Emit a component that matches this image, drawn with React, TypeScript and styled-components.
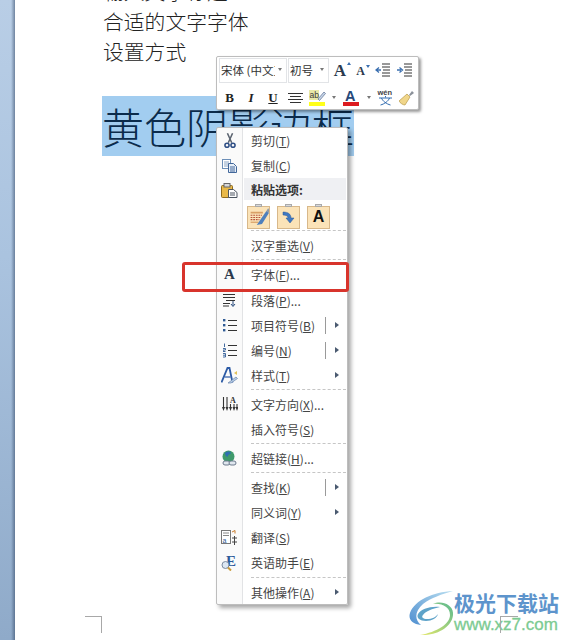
import type { ReactNode } from "react";
import styled, { createGlobalStyle } from "styled-components";

const cjk = `"Noto Sans CJK SC", "Liberation Sans", sans-serif`;

const GlobalStyle = createGlobalStyle`
    html, body {
        margin: 0;
        padding: 0;
        height: 640px;
        overflow: hidden;
        background: #fff;
    }
`;

const Page = styled.div`
    display: flex;
    width: 569px;
    height: 640px;
    overflow: hidden;
    position: relative;
    font-family: ${cjk};
`;

const Rail = styled.div`
    width: 15px;
    flex: none;
    background:
        linear-gradient(to right, transparent 0 11px, rgba(60, 80, 110, 0.15) 12px, rgba(50, 70, 100, 0.55) 15px),
        linear-gradient(to bottom, #b9cee6 0%, #aac3df 40%, #8faac9 100%);
`;

const Doc = styled.div`
    flex: 1;
    padding: 0 0 0 88px;
    margin-top: -24px;
`;

const Line = styled.div`
    font-size: 20.8px;
    font-weight: 300;
    line-height: 30px;
    color: #222;
`;

const Selected = styled.div`
    display: inline-block;
    margin: 30px 0 0 -1px;
    height: 60px;
    line-height: 60px;
    font-size: 42px;
    font-weight: 300;
    color: #0b2b4b;
    background: #a2cdf0;
    width: 252px;
    white-space: nowrap;
`;

const Toolbar = styled.div`
    position: absolute;
    left: 216px;
    top: 56px;
    width: 203px;
    height: 54px;
    box-sizing: border-box;
    background: #fff;
    border: 1px solid #bdbdbd;
    border-radius: 2px;
    box-shadow: 2px 2px 3px rgba(0, 0, 0, 0.4);
    padding: 1px 2px;
    display: flex;
    flex-direction: column;
    z-index: 3;
`;

const ToolRow = styled.div`
    display: flex;
    align-items: center;
    height: 25px;
`;

const ToolRowBottom = styled(ToolRow)`
    margin-top: 2px;
`;

const Select = styled.div<{ $w: number }>`
    width: ${(p) => p.$w}px;
    height: 25px;
    box-sizing: border-box;
    border: 1px solid #e2e4e7;
    margin-right: 1px;
    font-size: 11.5px;
    line-height: 14px;
    color: #333;
    display: flex;
    align-items: center;
    gap: 3px;
    padding: 0 4px 2px 1px;
    white-space: nowrap;
`;

const SelectText = styled.span`
    flex: 1;
    overflow: hidden;
`;

const Caret = styled.span`
    width: 0;
    height: 0;
    flex: none;
    border-left: 2.5px solid transparent;
    border-right: 2.5px solid transparent;
    border-top: 3px solid #777;
`;

const ToolCell = styled.div<{ $w: number }>`
    width: ${(p) => p.$w}px;
    height: 25px;
    flex: none;
    display: flex;
    align-items: center;
    justify-content: center;
    font-family: "Liberation Serif", serif;
    color: #222;
`;

const GrowA = styled.span<{ $size: number; $down?: boolean }>`
    font-family: "Liberation Serif", serif;
    font-size: ${(p) => p.$size}px;
    font-weight: 700;
    line-height: 1;
    color: #2b3a4e;
    position: relative;
    &::after {
        content: "";
        display: ${(p) => (p.$down === undefined ? "none" : "block")};
        position: absolute;
        right: -5px;
        top: 0;
        border-left: 2.5px solid transparent;
        border-right: 2.5px solid transparent;
        border-bottom: ${(p) => (p.$down ? "0" : "3px solid #3a6fb0")};
        border-top: ${(p) => (p.$down ? "3px solid #3a6fb0" : "0")};
    }
`;

const StyleLetter = styled.span<{ $italic?: boolean; $under?: boolean }>`
    font-size: 13px;
    font-weight: 700;
    font-style: ${(p) => (p.$italic ? "italic" : "normal")};
    text-decoration: ${(p) => (p.$under ? "underline" : "none")};
`;

const Menu = styled.div`
    position: absolute;
    left: 216px;
    top: 127px;
    width: 132px;
    height: 478px;
    box-sizing: border-box;
    border: 1px solid #bdbdbd;
    border-radius: 2px;
    box-shadow: 3px 3px 4px rgba(0, 0, 0, 0.35);
    background: linear-gradient(to right, #fafafa 0 25px, #e2e3e5 25px 26px, #fff 26px);
    z-index: 2;
`;

const Row = styled.div`
    height: 25.1px;
    display: flex;
    align-items: center;
    position: relative;
    font-size: 12px;
    color: #444;
    white-space: nowrap;
`;

const HeaderBand = styled.div`
    flex: 1;
    align-self: flex-start;
    height: 22px;
    margin: 0 1px 0 2px;
    padding-left: 7px;
    background: #eff0f3;
    font-weight: 700;
    color: #333;
    display: flex;
    align-items: center;
`;

const IconSlot = styled.div`
    width: 25px;
    flex: none;
    display: flex;
    align-items: center;
    justify-content: center;
`;

const Label = styled.span`
    margin-left: 9px;
    u {
        text-underline-offset: 1px;
    }
`;

const SubDivider = styled.span`
    position: absolute;
    left: 108px;
    top: 4px;
    height: 17px;
    width: 1px;
    background: #9a9a9a;
`;

const Arrow = styled.span`
    position: absolute;
    left: 118px;
    top: 9px;
    width: 0;
    height: 0;
    border-top: 3.5px solid transparent;
    border-bottom: 3.5px solid transparent;
    border-left: 4px solid #4a5a70;
`;

const Sep = styled.div`
    height: 0;
    margin: 1px 1px 2px 34px;
    border-top: 1px dashed #c6c6c6;
`;

const PasteRow = styled.div`
    display: flex;
    gap: 7px;
    height: 26px;
    padding: 2px 0 0 30px;
    box-sizing: border-box;
    align-items: center;
`;

const PasteButton = styled.div`
    width: 23px;
    height: 23px;
    box-sizing: border-box;
    background: #fbe3b8;
    border: 1px solid #d8b88a;
    display: flex;
    align-items: center;
    justify-content: center;
    position: relative;
    font-family: "Liberation Sans", sans-serif;
    font-weight: 700;
    font-size: 16px;
    color: #111;
    &::before {
        content: "";
        position: absolute;
        top: -3px;
        left: 7px;
        width: 7px;
        height: 3px;
        background: #d9d9d9;
        border: 1px solid #aaa;
        box-sizing: border-box;
    }
`;

const Highlight = styled.div`
    position: absolute;
    left: 182px;
    top: 262px;
    width: 167px;
    height: 30px;
    box-sizing: border-box;
    border: 3px solid #d8342c;
    border-radius: 3px;
    z-index: 4;
`;

const CropLeft = styled.div`
    position: absolute;
    left: 85px;
    top: 616px;
    width: 16px;
    height: 16px;
    border-top: 1px solid #a8a8a8;
    border-right: 1px solid #a8a8a8;
`;

const CropRight = styled.div`
    position: absolute;
    left: 500px;
    top: 616px;
    width: 17px;
    height: 16px;
    border-top: 1px solid #a8a8a8;
    border-left: 1px solid #a8a8a8;
    z-index: 6;
`;

const Watermark = styled.div`
    position: absolute;
    left: 409px;
    top: 589px;
    display: flex;
    gap: 1px;
    z-index: 5;
`;

const BrandText = styled.div`
    display: flex;
    flex-direction: column;
`;

const BrandName = styled.div`
    font-size: 21px;
    line-height: 26px;
    font-weight: 700;
    color: #5d94cc;
    white-space: nowrap;
`;

const BrandUrl = styled.div`
    font-family: "Liberation Sans", sans-serif;
    font-size: 17px;
    line-height: 20px;
    color: #7ccb92;
    -webkit-text-stroke: 0.3px #7ccb92;
`;

const Scissors = () => (
    <svg width="12" height="16" viewBox="0 0 14 18">
        <path d="M4 0l5 11M10 0L5 11" stroke="#5b6470" strokeWidth="1.8" fill="none" />
        <circle cx="3.5" cy="14" r="2.4" stroke="#2f4f86" strokeWidth="1.8" fill="none" />
        <circle cx="10.5" cy="14" r="2.4" stroke="#2f4f86" strokeWidth="1.8" fill="none" />
    </svg>
);

const Copy = () => (
    <svg width="16" height="14" viewBox="0 0 16 14">
        <rect x="0.5" y="0.5" width="8" height="9" fill="#fff" stroke="#6d8fb8" />
        <path d="M2 3h5M2 5h5M2 7h5" stroke="#8aa5c5" />
        <path d="M6.5 4.5h5l3 3v6h-8z" fill="#e8f0f9" stroke="#42679a" />
        <path d="M8 8h5M8 10h5M8 12h5" stroke="#42679a" />
    </svg>
);

const Paste = () => (
    <svg width="17" height="15" viewBox="0 0 17 15">
        <rect x="0.5" y="2.5" width="11" height="12" rx="1" fill="#e9b949" stroke="#8f6b1e" />
        <rect x="3" y="0.5" width="6" height="3.5" fill="#d8d8d8" stroke="#666" />
        <path d="M7.5 6.5h5l3.5 3v5H7.5z" fill="#fff" stroke="#4d5560" />
        <path d="M9 10h5M9 12h5" stroke="#4d5560" />
    </svg>
);

const Paragraph = () => (
    <svg width="13" height="14" viewBox="0 0 13 14">
        <path d="M0 1.5h12M0 4.5h12M3 7.5h9M0 10.5h7M0 13h6" stroke="#333" />
        <path d="M10 8v4.5M8 11l2 2.5 2-2.5" stroke="#27497a" fill="none" />
    </svg>
);

const Bullets = () => (
    <svg width="14" height="14" viewBox="0 0 14 14">
        <rect x="0" y="1" width="2.4" height="2.4" fill="#2e5a95" />
        <rect x="0" y="6" width="2.4" height="2.4" fill="#2e5a95" />
        <rect x="0" y="11" width="2.4" height="2.4" fill="#2e5a95" />
        <path d="M5 2.5h9M5 7.5h9M5 12.5h9" stroke="#333" />
    </svg>
);

const Numbers = () => (
    <svg width="14" height="15" viewBox="0 0 14 15">
        <path d="M1.5 0.5v3.5M0 5.5h2.5v1.5H0v1.5h2.5M0 10.5h2.5v3.5H0M0 12.2h2" stroke="#2e5a95" strokeWidth="0.9" fill="none" />
        <path d="M5 2.5h9M5 7.5h9M5 12.5h9" stroke="#333" />
    </svg>
);

const StyleIcon = () => (
    <svg width="17" height="17" viewBox="0 0 17 17">
        <path d="M0.5 15.5L6.5 1h2l3 14.5" fill="none" stroke="#2c5aa5" strokeWidth="1.8" />
        <path d="M3.5 10h6" stroke="#2c5aa5" strokeWidth="1.2" />
        <path d="M7 16l8-6 1.5 1.5L10 16z" fill="#b9cde6" stroke="#6a87ad" strokeWidth="0.7" />
        <path d="M13 6l3-2v4z" fill="#e3c25a" />
    </svg>
);

const TextDirection = () => (
    <svg width="16" height="15" viewBox="0 0 16 15">
        <path d="M1.5 0v11M5 0v11M8.5 7v4M12 7v4M15 7v4" stroke="#333" strokeWidth="1.1" />
        <path d="M0 10l1.5 4 1.5-4zM3.5 10l1.5 4 1.5-4zM7 10l1.5 4 1.5-4zM10.5 10l1.5 4 1.5-4zM13.5 10l1.5 4 1.5-4z" fill="#333" />
        <text x="8" y="6" fontSize="8" fontFamily="Liberation Serif" fontWeight="700" fill="#333">A</text>
    </svg>
);

const Globe = () => (
    <svg width="17" height="17" viewBox="0 0 17 17">
        <circle cx="7.5" cy="6.5" r="6" fill="#3f9a6b" />
        <path d="M4 3c2-2 5-2 6 0-1 2-3 1-3 3S4 6 4 3z" fill="#2f6fb0" />
        <rect x="2" y="11" width="7" height="4" rx="2" fill="#dfe6ee" stroke="#6c7a8c" />
        <rect x="8" y="11" width="7" height="4" rx="2" fill="#dfe6ee" stroke="#6c7a8c" />
    </svg>
);

const Translate = () => (
    <svg width="17" height="16" viewBox="0 0 17 16">
        <rect x="0.5" y="0.5" width="9" height="13" fill="#fff" stroke="#777" />
        <path d="M2 3h6M2 5.5h6" stroke="#888" />
        <text x="1.5" y="12.5" fontSize="7" fontFamily="Liberation Sans" fill="#2e5a95">a</text>
        <path d="M11 8h5M13.5 6v9M11 12h5" stroke="#444" />
        <path d="M11 2l3-1.5M14 .5v3" stroke="#c77a2b" />
    </svg>
);

const Assistant = () => (
    <svg width="17" height="17" viewBox="0 0 17 17">
        <text x="5" y="12" fontSize="15" fontWeight="700" fontFamily="Liberation Serif" fill="#2c5a9a">E</text>
        <circle cx="4.5" cy="11" r="3.5" fill="#dce7f3" stroke="#7b8ba0" />
        <path d="M7 13.5l3 3" stroke="#c99a3a" strokeWidth="2" />
    </svg>
);

const Indent = ({ flip }: { flip?: boolean }) => (
    <svg width="16" height="15" viewBox="0 0 16 15">
        <path d="M7 1h8M7 4h8M8 7h7M7 10h8M7 13h8" stroke="#333" />
        <path d={flip ? "M0 7h4M2.5 4.5L5.5 7l-3 2.5" : "M6 7H2M4 4.5L1 7l3 2.5"} stroke="#3a6fb0" strokeWidth="1.3" fill="none" />
    </svg>
);

const AlignCenter = () => (
    <svg width="15" height="12" viewBox="0 0 15 12">
        <path d="M0 1.5h15M2 4.5h11M0 7.5h15M2 10.5h11" stroke="#333" />
    </svg>
);

const HighlightPen = () => (
    <svg width="17" height="17" viewBox="0 0 17 17">
        <rect x="0" y="1" width="10" height="10" fill="#e8e8a8" />
        <text x="0.5" y="8.5" fontSize="8.5" fontFamily="Liberation Sans" fill="#3a3a3a">ab</text>
        <path d="M9 10l6-7 1.5 1.5-6 7z" fill="#c6d4e8" stroke="#5a6f90" strokeWidth="0.7" />
        <rect x="0" y="13" width="16" height="4" fill="#ffff1a" />
    </svg>
);

const FontColor = () => (
    <svg width="17" height="17" viewBox="0 0 17 17">
        <text x="2" y="12" fontSize="14.5" fontWeight="700" fontFamily="Liberation Sans" fill="#27497a">A</text>
        <rect x="0" y="13" width="16" height="4" fill="#dc1c20" />
    </svg>
);

const Pinyin = () => (
    <svg width="17" height="17" viewBox="0 0 17 17">
        <text x="0.5" y="6" fontSize="7.5" fontWeight="700" fontFamily="Liberation Sans" fill="#444">wén</text>
        <path d="M8.5 7v1.5M2 9h13M4.5 9c1 3 5 6 9 7M12.5 9c-1 3-5 6-9 7" stroke="#2f6bb0" fill="none" />
    </svg>
);

const Brush = () => (
    <svg width="16" height="16" viewBox="0 0 16 16">
        <path d="M10 5l3-4 2 2-4 3z" fill="#8a9099" />
        <path d="M0 11l8-7 3 3-5 8C4 15 1 13 0 11z" fill="#f0d68a" stroke="#b89a4a" strokeWidth="0.7" />
    </svg>
);

const PasteKeep = () => (
    <svg width="24" height="24" viewBox="0 0 24 24">
        <rect x="3" y="6" width="14" height="2" fill="#d9a066" />
        <path d="M3 10h13M3 12.5h11M3 15h10" stroke="#b5533a" strokeWidth="1.2" strokeDasharray="2 1" />
        <path d="M3 18h9" stroke="#d9a066" strokeWidth="1.4" />
        <path d="M10 21L21 5l3 2-8 13z" fill="#4f80bd" />
        <path d="M21 5l2-3 2 2-2 3z" fill="#8e9aa8" />
    </svg>
);

const PasteMerge = () => (
    <svg width="15" height="15" viewBox="0 0 15 15">
        <path d="M2 2c5 0 8 2 8 6h3l-4 5-4-5h2c0-2-2-3-5-3z" fill="#3f78c2" stroke="#2b5a9a" strokeWidth="0.5" />
    </svg>
);

const Swirl = () => (
    <svg width="44" height="46" viewBox="0 0 44 46">
        <defs>
            <linearGradient id="blueArc" x1="1" y1="0" x2="0" y2="1">
                <stop offset="0" stopColor="#b9def0" />
                <stop offset="1" stopColor="#4f8fd0" />
            </linearGradient>
            <linearGradient id="greenArc" x1="1" y1="0" x2="0" y2="1">
                <stop offset="0" stopColor="#5ab98f" />
                <stop offset="1" stopColor="#e6e86a" />
            </linearGradient>
        </defs>
        <path d="M44 2C24 3 6 11 1 24c-2 6 2 11 11 12C5 30 6 22 14 15 22 9 33 5 44 2z" fill="url(#blueArc)" />
        <path d="M24 15c9-1 17 3 17 11 0 9-13 17-30 20 17 1 32-8 33-20C45 16 33 11 24 15z" fill="url(#greenArc)" />
        <path d="M31 18c-10-1-19 2-22 7-2 4 2 7 8 7 6 0 11-3 12-7-2 3-6 5-11 5-4 0-6-2-4-4 3-4 9-6 17-8z" fill="#5ea3c9" />
    </svg>
);

const MenuItem = ({ icon, label, mark, suffix = "", divider, arrow }: {
    icon?: ReactNode;
    label: string;
    mark: string;
    suffix?: string;
    divider?: boolean;
    arrow?: boolean;
}) => (
    <Row>
        <IconSlot>{icon}</IconSlot>
        <Label>
            {label}(<u>{mark}</u>){suffix}
        </Label>
        {divider && <SubDivider />}
        {arrow && <Arrow />}
    </Row>
);

export default function App() {
    return (
        <Page>
            <GlobalStyle />
            <Rail />
            <Doc>
                <Line>输入文字标题</Line>
                <Line>合适的文字字体</Line>
                <Line>设置方式</Line>
                <Selected>黄色阴影边框</Selected>
            </Doc>

            <Toolbar>
                <ToolRow>
                    <Select $w={68}>
                        <SelectText>宋体 (中文正文)</SelectText>
                        <Caret />
                    </Select>
                    <Select $w={42}>
                        <SelectText>初号</SelectText>
                        <Caret />
                    </Select>
                    <ToolCell $w={20}><GrowA $size={17} $down={false}>A</GrowA></ToolCell>
                    <ToolCell $w={21}><GrowA $size={12} $down>A</GrowA></ToolCell>
                    <ToolCell $w={23}><Indent /></ToolCell>
                    <ToolCell $w={22}><Indent flip /></ToolCell>
                </ToolRow>
                <ToolRowBottom>
                    <ToolCell $w={21}><StyleLetter>B</StyleLetter></ToolCell>
                    <ToolCell $w={22}><StyleLetter $italic>I</StyleLetter></ToolCell>
                    <ToolCell $w={22}><StyleLetter $under>U</StyleLetter></ToolCell>
                    <ToolCell $w={22}><AlignCenter /></ToolCell>
                    <ToolCell $w={22}><HighlightPen /></ToolCell>
                    <ToolCell $w={12}><Caret /></ToolCell>
                    <ToolCell $w={23}><FontColor /></ToolCell>
                    <ToolCell $w={11}><Caret /></ToolCell>
                    <ToolCell $w={22}><Pinyin /></ToolCell>
                    <ToolCell $w={22}><Brush /></ToolCell>
                </ToolRowBottom>
            </Toolbar>

            <Menu>
                <MenuItem icon={<Scissors />} label="剪切" mark="T" />
                <MenuItem icon={<Copy />} label="复制" mark="C" />
                <Row>
                    <IconSlot><Paste /></IconSlot>
                    <HeaderBand>粘贴选项:</HeaderBand>
                </Row>
                <PasteRow>
                    <PasteButton><PasteKeep /></PasteButton>
                    <PasteButton><PasteMerge /></PasteButton>
                    <PasteButton>A</PasteButton>
                </PasteRow>
                <Sep />
                <MenuItem label="汉字重选" mark="V" />
                <Sep />
                <MenuItem icon={<GrowA $size={15}>A</GrowA>} label="字体" mark="F" suffix="..." />
                <MenuItem icon={<Paragraph />} label="段落" mark="P" suffix="..." />
                <MenuItem icon={<Bullets />} label="项目符号" mark="B" divider arrow />
                <MenuItem icon={<Numbers />} label="编号" mark="N" divider arrow />
                <MenuItem icon={<StyleIcon />} label="样式" mark="T" arrow />
                <Sep />
                <MenuItem icon={<TextDirection />} label="文字方向" mark="X" suffix="..." />
                <MenuItem label="插入符号" mark="S" />
                <Sep />
                <MenuItem icon={<Globe />} label="超链接" mark="H" suffix="..." />
                <Sep />
                <MenuItem label="查找" mark="K" divider arrow />
                <MenuItem label="同义词" mark="Y" arrow />
                <MenuItem icon={<Translate />} label="翻译" mark="S" />
                <MenuItem icon={<Assistant />} label="英语助手" mark="E" />
                <Sep />
                <MenuItem label="其他操作" mark="A" arrow />
            </Menu>

            <Highlight />
            <CropLeft />
            <CropRight />

            <Watermark>
                <Swirl />
                <BrandText>
                    <BrandName>极光下载站</BrandName>
                    <BrandUrl>www.xz7.com</BrandUrl>
                </BrandText>
            </Watermark>
        </Page>
    );
}
